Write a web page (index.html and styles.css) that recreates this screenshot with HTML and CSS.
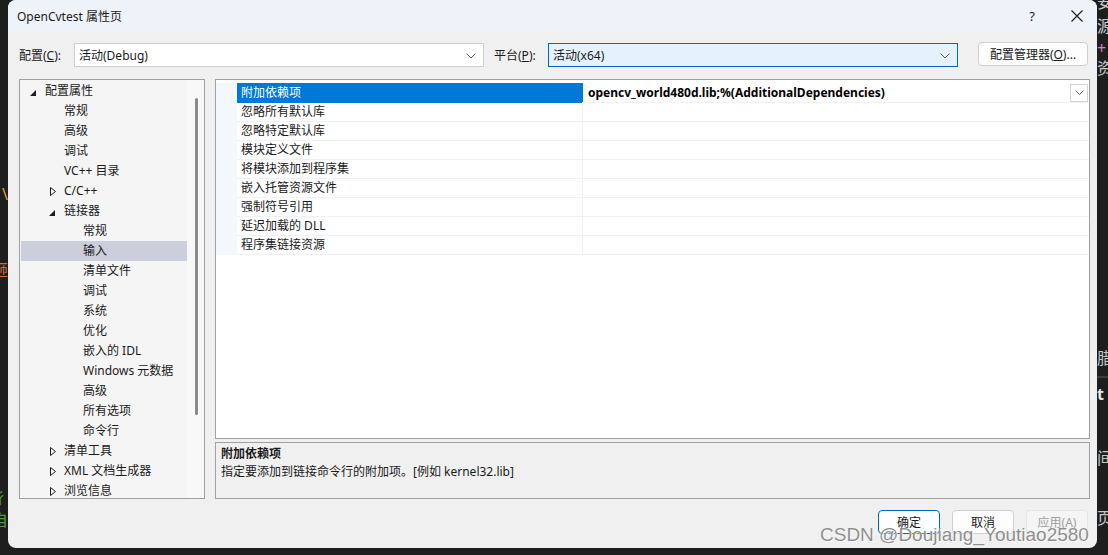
FILE: index.html
```html
<!DOCTYPE html>
<html lang="zh-CN">
<head>
  <meta charset="UTF-8" />
  <meta name="viewport" content="width=device-width, initial-scale=1.0" />
  <title>OpenCvtest 属性页</title>
  <link rel="stylesheet" href="styles.css">
</head>
<body>
  <div class="screen">
    <!-- Editor behind the dialog, left edge -->
    <div class="strip strip-left">
      <div class="code-line orange" style="margin-top: 184px">\</div>
      <div class="code-line brown" style="margin-top: 56px">砸</div>
      <div class="code-line green" style="margin-top: 208px">彳</div>
      <div class="code-line green" style="margin-top: 2px">自</div>
    </div>

    <div class="dialog">
      <div class="titlebar">
        <span class="title">OpenCvtest 属性页</span>
        <span class="help">?</span>
        <svg class="close" width="12" height="12" viewBox="0 0 12 12">
          <path d="M0.5 0.5 L11.5 11.5 M11.5 0.5 L0.5 11.5" stroke="#1c1c1c" stroke-width="1.1" fill="none"/>
        </svg>
      </div>

      <div class="content">
        <!-- Configuration / platform selectors -->
        <div class="config-row">
          <span class="config-label">配置(<u>C</u>):</span>
          <div class="combo">
            <span>活动(Debug)</span>
            <svg class="chevron" width="10" height="6" viewBox="0 0 10 6"><polyline points="0.5,0.5 5,5 9.5,0.5" fill="none" stroke="#5a5a5a" stroke-width="1"/></svg>
          </div>
          <span class="config-label platform-label">平台(<u>P</u>):</span>
          <div class="combo focused">
            <span>活动(x64)</span>
            <svg class="chevron" width="10" height="6" viewBox="0 0 10 6"><polyline points="0.5,0.5 5,5 9.5,0.5" fill="none" stroke="#5a5a5a" stroke-width="1"/></svg>
          </div>
          <button class="btn manager">配置管理器(<u>O</u>)...</button>
        </div>

        <div class="main">
          <!-- Property tree -->
          <div class="tree">
            <div class="tree-list">
              <div class="node lv0"><span class="toggle"><svg width="6" height="6" viewBox="0 0 6 6"><polygon points="6,0 6,6 0,6" fill="#1c1c1c"/></svg></span>配置属性</div>
              <div class="node lv1"><span class="toggle"></span>常规</div>
              <div class="node lv1"><span class="toggle"></span>高级</div>
              <div class="node lv1"><span class="toggle"></span>调试</div>
              <div class="node lv1"><span class="toggle"></span>VC++ 目录</div>
              <div class="node lv1"><span class="toggle"><svg class="closed" width="6" height="9" viewBox="0 0 6 9"><polygon points="0.5,0.5 5.5,4.5 0.5,8.5" fill="none" stroke="#1c1c1c" stroke-width="1"/></svg></span>C/C++</div>
              <div class="node lv1"><span class="toggle"><svg width="6" height="6" viewBox="0 0 6 6"><polygon points="6,0 6,6 0,6" fill="#1c1c1c"/></svg></span>链接器</div>
              <div class="node lv2"><span class="toggle"></span>常规</div>
              <div class="node lv2 selected"><span class="toggle"></span>输入</div>
              <div class="node lv2"><span class="toggle"></span>清单文件</div>
              <div class="node lv2"><span class="toggle"></span>调试</div>
              <div class="node lv2"><span class="toggle"></span>系统</div>
              <div class="node lv2"><span class="toggle"></span>优化</div>
              <div class="node lv2"><span class="toggle"></span>嵌入的 IDL</div>
              <div class="node lv2"><span class="toggle"></span>Windows 元数据</div>
              <div class="node lv2"><span class="toggle"></span>高级</div>
              <div class="node lv2"><span class="toggle"></span>所有选项</div>
              <div class="node lv2"><span class="toggle"></span>命令行</div>
              <div class="node lv1"><span class="toggle"><svg class="closed" width="6" height="9" viewBox="0 0 6 9"><polygon points="0.5,0.5 5.5,4.5 0.5,8.5" fill="none" stroke="#1c1c1c" stroke-width="1"/></svg></span>清单工具</div>
              <div class="node lv1"><span class="toggle"><svg class="closed" width="6" height="9" viewBox="0 0 6 9"><polygon points="0.5,0.5 5.5,4.5 0.5,8.5" fill="none" stroke="#1c1c1c" stroke-width="1"/></svg></span>XML 文档生成器</div>
              <div class="node lv1"><span class="toggle"><svg class="closed" width="6" height="9" viewBox="0 0 6 9"><polygon points="0.5,0.5 5.5,4.5 0.5,8.5" fill="none" stroke="#1c1c1c" stroke-width="1"/></svg></span>浏览信息</div>
            </div>
            <div class="scrollbar"><div class="thumb"></div></div>
          </div>

          <div class="right">
            <!-- Property grid -->
            <div class="grid">
              <div class="prop active">
                <span class="gutter"></span>
                <span class="name">附加依赖项</span>
                <span class="value">
                  <span>opencv_world480d.lib;%(AdditionalDependencies)</span>
                  <span class="drop"><svg width="9" height="5" viewBox="0 0 9 5"><polyline points="0.5,0.5 4.5,4.5 8.5,0.5" fill="none" stroke="#6a6a6a" stroke-width="1"/></svg></span>
                </span>
              </div>
              <div class="prop"><span class="gutter"></span><span class="name">忽略所有默认库</span><span class="value"></span></div>
              <div class="prop"><span class="gutter"></span><span class="name">忽略特定默认库</span><span class="value"></span></div>
              <div class="prop"><span class="gutter"></span><span class="name">模块定义文件</span><span class="value"></span></div>
              <div class="prop"><span class="gutter"></span><span class="name">将模块添加到程序集</span><span class="value"></span></div>
              <div class="prop"><span class="gutter"></span><span class="name">嵌入托管资源文件</span><span class="value"></span></div>
              <div class="prop"><span class="gutter"></span><span class="name">强制符号引用</span><span class="value"></span></div>
              <div class="prop"><span class="gutter"></span><span class="name">延迟加载的 DLL</span><span class="value"></span></div>
              <div class="prop"><span class="gutter"></span><span class="name">程序集链接资源</span><span class="value"></span></div>
            </div>
            <!-- Description of the selected property -->
            <div class="desc">
              <div class="desc-title">附加依赖项</div>
              <div>指定要添加到链接命令行的附加项。[例如 kernel32.lib]</div>
            </div>
          </div>
        </div>

        <div class="footer">
          <button class="btn default">确定</button>
          <button class="btn">取消</button>
          <button class="btn disabled">应用(A)</button>
        </div>
      </div>
    </div>

    <!-- Editor behind the dialog, right edge -->
    <div class="strip strip-right">
      <div class="code-line grey" style="margin-top: -8px">安</div>
      <div class="code-line grey" style="margin-top: 4px">源</div>
      <div class="code-line purple" style="margin-top: 2px">+</div>
      <div class="code-line grey" style="margin-top: 0">资</div>
      <div class="code-line grey" style="margin-top: 270px">腊</div>
      <div class="band"></div>
      <div class="code-line white" style="margin-top: 6px">t</div>
      <div class="code-line grey" style="margin-top: 44px">间</div>
      <div class="code-line grey" style="margin-top: 40px">页</div>
    </div>
  </div>

  <div class="watermark">CSDN @Doujiang_Youtiao2580</div>
</body>
</html>
```

FILE: styles.css
```css
/* Page */
body {
  margin: 0;
  background-color: #1e1e1e;
  font-family: "Noto Sans", "Noto Sans CJK SC", sans-serif;
  font-size: 12px;
  color: #1a1a1a;
}

.screen {
  display: flex;
  width: 1108px;
  height: 555px;
  overflow: hidden;
}

/* Dark editor strips at the sides */
.strip {
  display: flex;
  flex-direction: column;
  overflow: hidden;
  flex-shrink: 0;
}
.strip-left {
  width: 8px;
}
.strip-right {
  width: 11px;
  align-items: flex-start;
}
.code-line {
  display: flex;
  justify-content: flex-end;
  height: 20px;
  line-height: 20px;
  font-size: 16px;
  white-space: nowrap;
}
.strip-right .code-line {
  justify-content: flex-start;
}
.orange { color: #d7a14b; }
.brown { color: #c0703f; }
.green { color: #4f9a3f; }
.grey { color: #c8c8c8; }
.purple { color: #c586c0; }
.white { color: #e6e6e6; font-weight: bold; }
.band {
  width: 11px;
  height: 2px;
  margin-top: 8px;
  background-color: #3a3a3a;
}

/* Dialog window */
.dialog {
  width: 1089px;
  height: 548px;
  flex-shrink: 0;
  background-color: #f0f0f0;
  border-radius: 8px;
  overflow: hidden;
  display: flex;
  flex-direction: column;
}

.titlebar {
  height: 31px;
  flex-shrink: 0;
  background-color: #eef2f9;
  display: flex;
  align-items: center;
  padding: 0 14px 0 9px;
}
.title {
  flex: 1;
}
.help {
  width: 14px;
  text-align: center;
  font-size: 13px;
  color: #1c1c1c;
}
.close {
  margin-left: 32px;
}

.content {
  flex: 1;
  display: flex;
  flex-direction: column;
  padding: 0 7px 0 11px;
}

/* Selector row */
.config-row {
  display: flex;
  align-items: center;
  height: 24px;
  margin-top: 12px;
}
.config-label {
  width: 55px;
  flex-shrink: 0;
}
.platform-label {
  width: 54px;
  margin-left: 10px;
}
.combo {
  width: 410px;
  height: 24px;
  box-sizing: border-box;
  display: flex;
  align-items: center;
  justify-content: space-between;
  padding: 0 7px 0 4px;
  background-color: #ffffff;
  border: 1px solid #cfcfcf;
}
.combo.focused {
  background-color: #e5f1fb;
  border-color: #0067c0;
}
.chevron {
  margin-top: 1px;
}

.btn {
  height: 24px;
  width: 62px;
  box-sizing: border-box;
  padding: 0;
  font-family: inherit;
  font-size: 12px;
  color: #1a1a1a;
  background-color: #fdfdfd;
  border: 1px solid #d0d0d0;
  border-radius: 4px;
}
.btn.manager {
  width: 110px;
  margin-left: 20px;
  margin-top: -2px;
}
.btn.default {
  border-color: #0067c0;
  background-color: #ffffff;
}
.btn.disabled {
  color: #a0a0a0;
  background-color: #f5f5f5;
  border-color: #e5e5e5;
}

/* Tree and grid area */
.main {
  display: flex;
  gap: 10px;
  height: 420px;
  margin-top: 12px;
}

.tree {
  width: 186px;
  flex-shrink: 0;
  box-sizing: border-box;
  border: 1px solid #a0a0a0;
  background-color: #f5f5f5;
  display: flex;
  overflow: hidden;
}
.tree-list {
  width: 166px;
  padding: 1px 0 0 1px;
}
.node {
  height: 20px;
  line-height: 20px;
  display: flex;
  align-items: center;
  white-space: nowrap;
}
.node.lv0 { padding-left: 9px; }
.node.lv1 { padding-left: 28px; }
.node.lv2 { padding-left: 47px; }
.node.selected {
  background-color: #cccedb;
}
.toggle {
  width: 15px;
  height: 20px;
  flex-shrink: 0;
  display: flex;
  align-items: center;
}
.toggle svg {
  margin-top: 4px;
}
.toggle svg.closed {
  margin: 1px 0 0 1px;
}
.scrollbar {
  flex: 1;
  background-color: #f8f8f8;
  display: flex;
  justify-content: center;
  padding-top: 18px;
}
.thumb {
  width: 3px;
  height: 317px;
  margin-left: 1px;
  border-radius: 2px;
  background-color: #8a8a8a;
}

.right {
  flex: 1;
  display: flex;
  flex-direction: column;
  gap: 3px;
}

.grid {
  height: 360px;
  box-sizing: border-box;
  border: 1px solid #a0a0a0;
  background-color: #ffffff;
  padding-top: 3px;
}
.prop {
  display: grid;
  grid-template-columns: 21px 346px 1fr;
  height: 19px;
}
.gutter {
  background-color: #f4f7fc;
}
.name {
  padding-left: 4px;
  line-height: 19px;
  border-bottom: 1px solid #eef1f5;
  border-right: 1px solid #eef1f5;
  white-space: nowrap;
}
.value {
  display: flex;
  align-items: center;
  justify-content: space-between;
  padding: 0 1px 0 5px;
  border-bottom: 1px solid #eef1f5;
  font-weight: bold;
  color: #000000;
}
.prop.active .name {
  background-color: #0078d7;
  border-color: #0078d7;
  color: #ffffff;
}
.drop {
  width: 18px;
  height: 18px;
  box-sizing: border-box;
  border: 1px solid #d4d4d4;
  display: flex;
  align-items: center;
  justify-content: center;
}

.desc {
  height: 57px;
  box-sizing: border-box;
  border: 1px solid #a0a0a0;
  padding: 2px 5px 0;
  line-height: 18px;
}
.desc-title {
  font-weight: bold;
}

/* Dialog buttons */
.footer {
  display: flex;
  justify-content: flex-end;
  gap: 12px;
  margin-top: 11px;
  padding-right: 2px;
}

/* CSDN watermark over the corner */
.watermark {
  position: absolute;
  left: 820px;
  top: 524px;
  font-family: "Liberation Sans", sans-serif;
  font-size: 19px;
  color: #8f8f8f;
  text-shadow: 0 0 1px #ffffff, 1px 1px 0 rgba(255, 255, 255, 0.7);
  white-space: nowrap;
}
```
